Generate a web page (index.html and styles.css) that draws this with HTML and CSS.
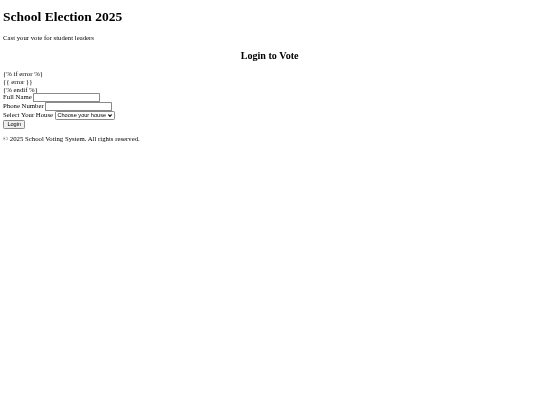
FILE: index.html
```html
<!DOCTYPE html>
<html>
<head>
<meta charset="utf-8">
<title>School Election 2025</title>
<link rel="stylesheet" href="styles.css">
</head>
<body>
<header class="site-header">
  <h1 class="site-title">School Election 2025</h1>
  <p>Cast your vote for student leaders</p>
</header>
<main class="login">
  <h2 class="login-title">Login to Vote</h2>
  <form class="login-form">
    {% if error %}
    <div class="error">{{ error }}</div>
    {% endif %}
    <div class="field"><label>Full Name</label> <input type="text"></div>
    <div class="field"><label>Phone Number</label> <input type="text"></div>
    <div class="field"><label>Select Your House</label> <select class="house"><option>Choose your house</option></select></div>
    <button type="submit">Login</button>
  </form>
</main>
<footer class="site-footer">
  <p>&copy; 2025 School Voting System. All rights reserved.</p>
</footer>
</body>
</html>
```

FILE: styles.css
```css
html {
  zoom: 0.421875;
}
body {
  font-family: "Liberation Serif", "Times New Roman", serif;
  line-height: 1.15;
  color: #000;
  background: #fff;
  will-change: transform;
}
h1, h2 {
  line-height: 1.15;
}
.site-title {
  margin-top: 15px;
}
.login-title {
  text-align: center;
}
input, select, button {
  font-family: "Liberation Sans", Arial, sans-serif;
  font-size: 13.33px;
}
input {
  border: 2px solid #8a8a8a;
  border-radius: 2px;
  padding: 1px 2px;
  height: 21px;
  box-sizing: border-box;
  width: 157px;
}
.house {
  appearance: none;
  -webkit-appearance: none;
  border: 2px solid #8a8a8a;
  border-radius: 3px;
  padding: 1px 19px 1px 4px;
  height: 21px;
  box-sizing: border-box;
  background: #fff url("data:image/svg+xml,%3Csvg xmlns='http://www.w3.org/2000/svg' viewBox='0 0 10 6'%3E%3Cpath d='M1 1l4 4 4-4' fill='none' stroke='%23000' stroke-width='2.2'/%3E%3C/svg%3E") no-repeat right 5px center / 10px 6px;
  color: #000;
}
button {
  border: 2px solid #8a8a8a;
  border-radius: 3px;
  background: #efefef;
  padding: 1px 8px;
  height: 21px;
}
```
